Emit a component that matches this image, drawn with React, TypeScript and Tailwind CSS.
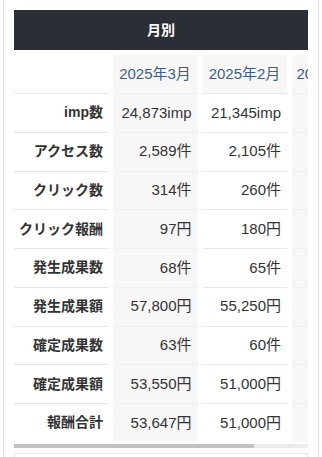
import React from "react";

type Row = { label: string; mar: string; feb: string };

const months = ["2025年3月", "2025年2月", "2025年1月"];

const rows: Row[] = [
    {label: "imp数", mar: "24,873imp", feb: "21,345imp"},
    {label: "アクセス数", mar: "2,589件", feb: "2,105件"},
    {label: "クリック数", mar: "314件", feb: "260件"},
    {label: "クリック報酬", mar: "97円", feb: "180円"},
    {label: "発生成果数", mar: "68件", feb: "65件"},
    {label: "発生成果額", mar: "57,800円", feb: "55,250円"},
    {label: "確定成果数", mar: "63件", feb: "60件"},
    {label: "確定成果額", mar: "53,550円", feb: "51,000円"},
    {label: "報酬合計", mar: "53,647円", feb: "51,000円"},
];

const App: React.FC = () => {
    return (
        <div className="min-h-screen bg-white text-[#333] font-['Liberation_Sans','Noto_Sans_CJK_JP',sans-serif]">
            <div className="ml-[3px] w-[316px] border-x border-[#dddddd] px-[10px] pt-[10px] min-h-[457px]">
                {/* Header */}
                <div className="h-10 bg-[#2a2e36] text-white font-bold text-[14px] flex items-center justify-center">
                    月別
                </div>

                {/* Scroll area */}
                <div className="w-[294px] overflow-hidden mt-[5px]">
                    <div className="grid grid-cols-[94px_85px_85px_85px] gap-x-[4.5px] w-max">
                        {/* Month row */}
                        <div className="h-[38px]"></div>
                        {months.map((m, i) => (
                            <div
                                key={m}
                                className="h-[38px] bg-[#f7f7f7] text-[#3f5e85] text-[15px] flex items-center justify-center whitespace-nowrap"
                                style={i === 2 ? {justifyContent: "flex-start", paddingLeft: 5} : undefined}
                            >
                                {m}
                            </div>
                        ))}

                        {/* Data rows */}
                        {rows.map((r) => (
                            <React.Fragment key={r.label}>
                                <div className="h-[38.75px] border-t border-[#e6e6e6] flex items-center justify-end pr-[5px] text-[14px] font-bold whitespace-nowrap">
                                    {r.label}
                                </div>
                                <div className="h-[38.75px] bg-[#f7f7f7] border-t border-[#efefef] flex items-center justify-end pr-[6px] text-[15px] whitespace-nowrap">
                                    {r.mar}
                                </div>
                                <div className="h-[38.75px] border-t border-[#e9e9e9] flex items-center justify-end pr-[6px] text-[15px] whitespace-nowrap">
                                    {r.feb}
                                </div>
                                <div className="h-[38.75px] bg-[#f7f7f7] border-t border-[#efefef]"></div>
                            </React.Fragment>
                        ))}
                    </div>
                </div>

                {/* Scrollbar */}
                <div className="mt-[2.5px] h-[4px] flex">
                    <div className="w-[240px] bg-[#c1c1c1]"></div>
                    <div className="flex-1 bg-[#ececec]"></div>
                </div>

                {/* Next block */}
                <div className="mt-[5px] h-10 border border-[#e6e6e6]"></div>
            </div>
        </div>
    );
};

export default App;
